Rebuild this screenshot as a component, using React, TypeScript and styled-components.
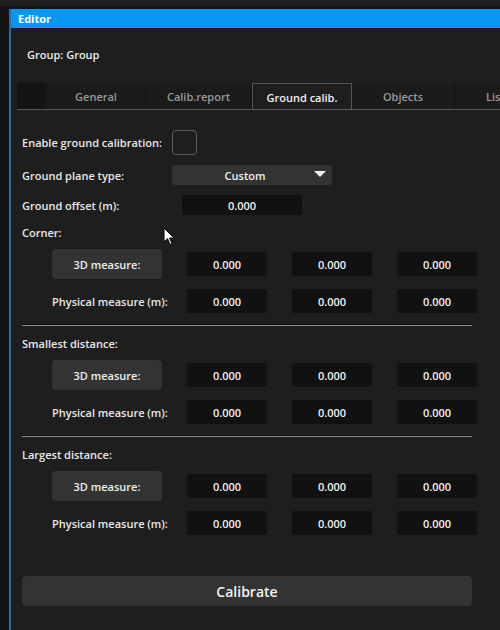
import React from 'react'
import styled, { createGlobalStyle } from 'styled-components'

const GlobalStyle = createGlobalStyle`
  html, body {
    margin: 0;
    background: #121212;
    font-family: "Open Sans", "Noto Sans", sans-serif;
  }
  * { box-sizing: border-box; }
`

const Screen = styled.div`
  position: relative;
  width: 500px;
  height: 630px;
  overflow: hidden;
  padding: 3px 0 0 9px;
  background: #141414;
  border-top: 6px solid #1e1e1e;
`

const Window = styled.div`
  width: 491px;
  height: 621px;
  border-left: 2px solid #2c6aa3;
  background: #1e1e1e;
  display: flex;
  flex-direction: column;
`

const TitleBar = styled.div`
  height: 19px;
  background: #0796f2;
  color: #fff;
  font-size: 11px;
  font-weight: 700;
  line-height: 19px;
  padding-left: 7px;
`

const GroupTitle = styled.div`
  height: 55px;
  padding-left: 16px;
  padding-bottom: 2px;
  display: flex;
  align-items: center;
  color: #ececec;
  font-size: 11px;
  font-weight: 600;
`

const TabBar = styled.div`
  display: flex;
  height: 27px;
  margin-left: 6px;
  border-bottom: 1px solid #5a5a5a;
  overflow: hidden;
`

const Tab = styled.div<{ w: number; active?: boolean; blank?: boolean }>`
  flex: 0 0 ${p => p.w}px;
  display: flex;
  align-items: center;
  justify-content: center;
  font-size: 11px;
  font-weight: 600;
  color: ${p => (p.active ? '#f0f0f0' : '#9a9a9a')};
  background: ${p => (p.blank ? '#141414' : p.active ? '#1e1e1e' : '#1b1b1b')};
  border-right: ${p => (p.active ? '1px solid #555' : '2px solid #161616')};
  border-left: ${p => (p.active ? '1px solid #555' : 'none')};
  border-top: ${p => (p.active ? '1px solid #555' : 'none')};
  margin-bottom: ${p => (p.active ? '-1px' : '0')};
  white-space: nowrap;
`

const Panel = styled.div`
  padding: 0 0 0 11px;
  display: flex;
  flex-direction: column;
  color: #e8e8e8;
  font-size: 11px;
  font-weight: 600;
`

const Row = styled.div<{ h: number; mt: number; indent?: number }>`
  display: flex;
  align-items: center;
  height: ${p => p.h}px;
  margin-top: ${p => p.mt}px;
  padding-left: ${p => p.indent ?? 0}px;
`

const Label = styled.div<{ w?: number }>`
  flex: 0 0 ${p => (p.w ? `${p.w}px` : 'auto')};
  white-space: nowrap;
`

const Checkbox = styled.div`
  width: 25px;
  height: 25px;
  border: 1px solid #5c5c5c;
  border-radius: 4px;
  background: #1e1e1e;
`

const Combo = styled.div`
  position: relative;
  width: 160px;
  height: 20px;
  background: #333333;
  border-radius: 3px;
  display: flex;
  align-items: center;
  justify-content: center;
  padding-right: 14px;
  color: #f0f0f0;
`

const ComboArrow = styled.div`
  position: absolute;
  right: 6px;
  top: 6px;
  width: 0;
  height: 0;
  border-left: 6px solid transparent;
  border-right: 6px solid transparent;
  border-top: 6px solid #f0f0f0;
`

const Field = styled.div<{ w: number; ml?: number }>`
  flex: 0 0 ${p => p.w}px;
  margin-left: ${p => p.ml ?? 0}px;
  height: 24px;
  background: #111111;
  border-radius: 2px;
  display: flex;
  align-items: center;
  justify-content: center;
  color: #f2f2f2;
`

const SmallField = styled(Field)`
  height: 20px;
`

const Button = styled.div<{ w?: number }>`
  flex: 0 0 ${p => (p.w ? `${p.w}px` : 'auto')};
  height: 30px;
  background: #333333;
  border-radius: 4px;
  display: flex;
  align-items: center;
  justify-content: center;
  color: #eeeeee;
`

const Separator = styled.div`
  width: 450px;
  height: 2px;
  margin-top: 11px;
  border-top: 1px solid #0e0e0e;
  background: #8a8a8a;
`

const CalibrateButton = styled.div`
  width: 450px;
  height: 30px;
  margin-top: 41px;
  background: #333333;
  border-radius: 4px;
  display: flex;
  align-items: center;
  justify-content: center;
  color: #f2f2f2;
  font-size: 14px;
  font-weight: 600;
`

const Cursor = styled.svg`
  position: absolute;
  left: 163px;
  top: 221px;
`

const MeasureBlock = ({ title, last }: { title: string; last?: boolean }) => (
  <>
    <Row h={20} mt={7}>
      <Label>{title}</Label>
    </Row>
    <Row h={30} mt={7} indent={30}>
      <Button w={110}>3D measure:</Button>
      <Field w={80} ml={25}>0.000</Field>
      <Field w={80} ml={25}>0.000</Field>
      <Field w={80} ml={25}>0.000</Field>
    </Row>
    <Row h={24} mt={10} indent={30}>
      <Label w={135}>Physical measure (m):</Label>
      <Field w={80}>0.000</Field>
      <Field w={80} ml={25}>0.000</Field>
      <Field w={80} ml={25}>0.000</Field>
    </Row>
    {!last && <Separator />}
  </>
)

export default function App() {
  return (
    <>
      <GlobalStyle />
      <Screen>
        <Window>
          <TitleBar>Editor</TitleBar>
          <GroupTitle>Group: Group</GroupTitle>
          <TabBar>
            <Tab w={30} blank />
            <Tab w={100}>General</Tab>
            <Tab w={105}>Calib.report</Tab>
            <Tab w={100} active>Ground calib.</Tab>
            <Tab w={104}>Objects</Tab>
            <Tab w={86}>Lists</Tab>
          </TabBar>
          <Panel>
            <Row h={25} mt={20}>
              <Label w={150}>Enable ground calibration:</Label>
              <Checkbox />
            </Row>
            <Row h={20} mt={10}>
              <Label w={150}>Ground plane type:</Label>
              <Combo>
                Custom
                <ComboArrow />
              </Combo>
            </Row>
            <Row h={20} mt={10}>
              <Label w={150}>Ground offset (m):</Label>
              <SmallField w={120} ml={10}>0.000</SmallField>
            </Row>
            <MeasureBlock title="Corner:" />
            <MeasureBlock title="Smallest distance:" />
            <MeasureBlock title="Largest distance:" last />
            <CalibrateButton>Calibrate</CalibrateButton>
          </Panel>
        </Window>
        <Cursor width="12" height="19" viewBox="0 0 12 19">
          <path d="M1 1 L1 15 L4.5 11.5 L7 17.5 L9 16.7 L6.6 11 L11 11 Z" fill="#fff" stroke="#000" strokeWidth="1" />
        </Cursor>
      </Screen>
    </>
  )
}
